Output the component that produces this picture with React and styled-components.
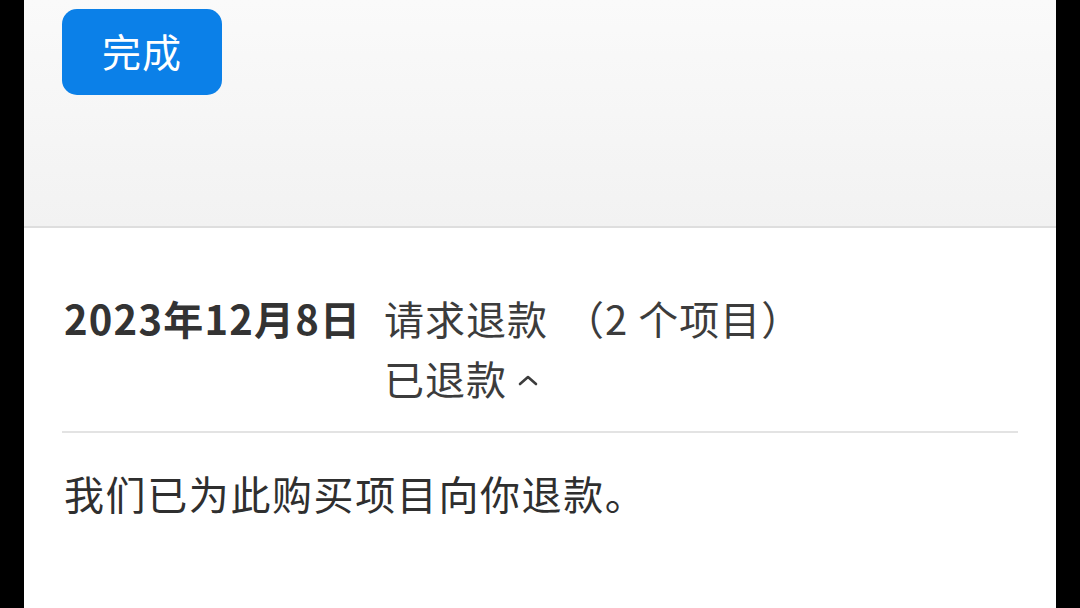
import React from "react";
import styled, { createGlobalStyle } from "styled-components";

const Global = createGlobalStyle`
  html, body { margin: 0; padding: 0; background: #000; }
  body { font-family: "Noto Sans CJK SC", "Noto Sans", sans-serif; }
  #root { height: 608px; }
`;

const Screen = styled.div`
  width: 1032px;
  height: 608px;
  margin: 0 auto;
  background: #fff;
  overflow: hidden;
  display: flex;
  flex-direction: column;
`;

const Header = styled.div`
  height: 228px;
  flex: none;
  box-sizing: border-box;
  background: linear-gradient(#fafafa, #f2f2f2);
  border-bottom: 2px solid #dedede;
  padding: 9px 0 0 38px;
`;

const DoneButton = styled.button`
  width: 160px;
  height: 86px;
  border: none;
  border-radius: 15px;
  background: #0b80e8;
  color: #fff;
  font-family: "Noto Sans CJK SC", sans-serif;
  font-size: 39px;
  letter-spacing: 1px;
  line-height: 1;
  padding: 0 0 4px;
  display: flex;
  align-items: center;
  justify-content: center;
`;

const Body = styled.div`
  padding: 60px 38px 0 38px;
  display: flex;
  flex-direction: column;
`;

const Row = styled.div`
  display: flex;
  align-items: flex-start;
  padding-left: 2px;
`;

const DateText = styled.div`
  font-size: 40px;
  font-weight: 700;
  color: #333;
  line-height: 60px;
  width: 320px;
  flex: none;
  letter-spacing: 1.2px;
`;

const Info = styled.div`
  display: flex;
  flex-direction: column;
  color: #3c3c3c;
  font-size: 40px;
  letter-spacing: 1px;
  line-height: 60px;
`;

const Line = styled.div`
  display: flex;
  align-items: center;
  white-space: nowrap;
`;

const Count = styled.span`
  margin-left: 16px;
`;

const Divider = styled.div`
  height: 2px;
  background: #e3e3e3;
  margin: 23px 0 0 0;
  width: 956px;
`;

const Message = styled.div`
  font-size: 40px;
  letter-spacing: 1.6px;
  color: #2f2f2f;
  line-height: 60px;
  margin-top: 30px;
  padding-left: 2px;
`;

const Chevron = () => (
  <svg width="22" height="14" viewBox="0 0 22 14" style={{ marginLeft: 10, marginTop: 4 }}>
    <path d="M3 11 L11 4 L19 11" fill="none" stroke="#3c3c3c" strokeWidth="2.6" strokeLinecap="round" strokeLinejoin="round" />
  </svg>
);

export default function App() {
  return (
    <>
      <Global />
      <Screen>
        <Header>
          <DoneButton>完成</DoneButton>
        </Header>
        <Body>
          <Row>
            <DateText>2023年12月8日</DateText>
            <Info>
              <Line>
                请求退款<Count>（2 个项目）</Count>
              </Line>
              <Line>
                已退款<Chevron />
              </Line>
            </Info>
          </Row>
          <Divider />
          <Message>我们已为此购买项目向你退款。</Message>
        </Body>
      </Screen>
    </>
  );
}
